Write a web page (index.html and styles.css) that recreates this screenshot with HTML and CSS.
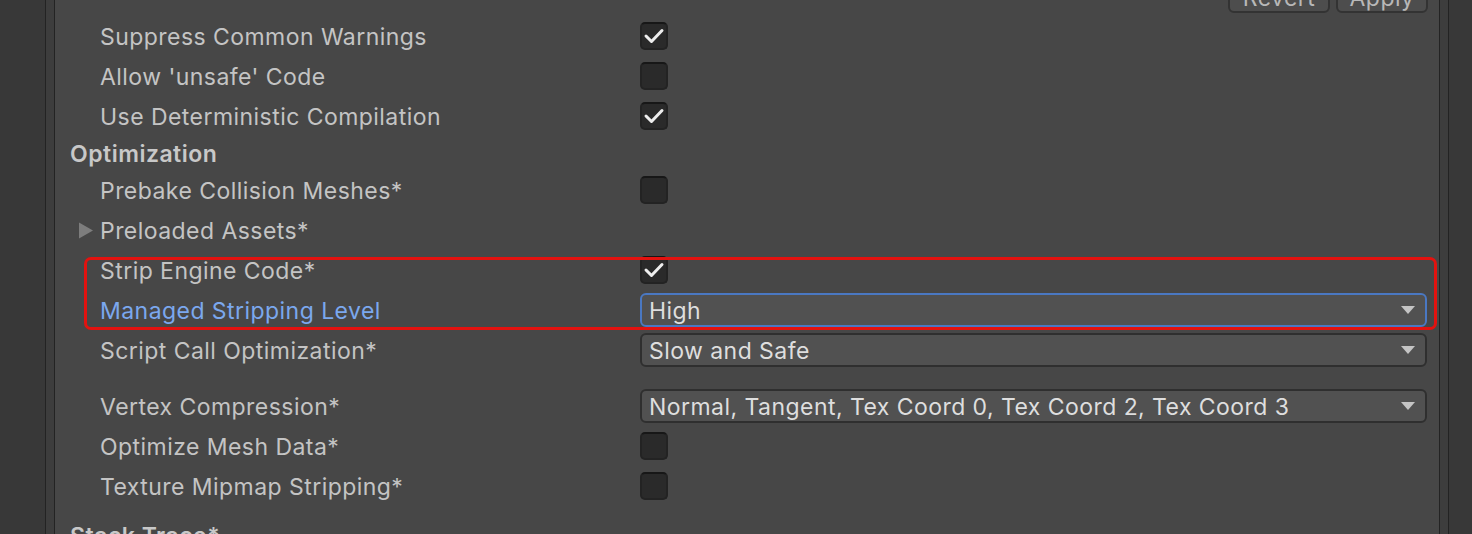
FILE: index.html
```html
<!DOCTYPE html>
<html>
<head>
<meta charset="utf-8">
<link rel="stylesheet" href="styles.css">
</head>
<body>
<div class="window">
  <div class="panel">
    <div class="topbar">
      <button class="btn btn-revert">Revert</button>
      <button class="btn btn-apply">Apply</button>
    </div>
    <div class="rows">
      <div class="row"><span class="label">Suppress Common Warnings</span><span class="check on"><svg viewBox="0 0 28 28"><polyline points="6,14 11.5,19.5 22,8.5"/></svg></span></div>
      <div class="row"><span class="label">Allow 'unsafe' Code</span><span class="check"></span></div>
      <div class="row"><span class="label">Use Deterministic Compilation</span><span class="check on"><svg viewBox="0 0 28 28"><polyline points="6,14 11.5,19.5 22,8.5"/></svg></span></div>
      <div class="header">Optimization</div>
      <div class="row"><span class="label">Prebake Collision Meshes*</span><span class="check"></span></div>
      <div class="row row-fold"><span class="fold"><svg viewBox="0 0 16 17"><polygon points="1,0.5 15,8.5 1,16.5"/></svg></span><span class="label">Preloaded Assets*</span></div>
      <div class="group">
        <div class="row"><span class="label">Strip Engine Code*</span><span class="check on"><svg viewBox="0 0 28 28"><polyline points="6,14 11.5,19.5 22,8.5"/></svg></span></div>
        <div class="row"><span class="label focus">Managed Stripping Level</span><div class="dropdown focused"><span class="value">High</span><span class="arrow"></span></div></div>
        <div class="highlight"></div>
      </div>
      <div class="row"><span class="label">Script Call Optimization*</span><div class="dropdown"><span class="value">Slow and Safe</span><span class="arrow"></span></div></div>
      <div class="spacer"></div>
      <div class="row"><span class="label">Vertex Compression*</span><div class="dropdown"><span class="value">Normal, Tangent, Tex Coord 0, Tex Coord 2, Tex Coord 3</span><span class="arrow"></span></div></div>
      <div class="row"><span class="label">Optimize Mesh Data*</span><span class="check"></span></div>
      <div class="row"><span class="label">Texture Mipmap Stripping*</span><span class="check"></span></div>
      <div class="header header-last">Stack Trace*</div>
    </div>
  </div>
</div>
</body>
</html>
```

FILE: styles.css
```css
* { box-sizing: border-box; }
html, body {
  margin: 0;
  padding: 0;
  height: 534px;
  overflow: hidden;
  background: #383838;
  font-family: Inter, "Noto Sans", sans-serif;
}
.window {
  margin-left: 45px;
  margin-right: 23px;
  height: 534px;
  background: #3d3d3d;
  border-left: 1px solid #232323;
  border-right: 1px solid #232323;
  padding: 0 8px;
}
.panel {
  height: 534px;
  background: #474747;
  border-left: 1px solid #232323;
  border-right: 1px solid #232323;
  overflow: hidden;
}
.topbar {
  display: flex;
  justify-content: flex-end;
  gap: 6px;
  margin-top: -17px;
  height: 30px;
  padding-right: 11px;
}
.btn {
  height: 30px;
  background: #4d4d4d;
  border: 2px solid #333333;
  border-radius: 6px;
  color: #b8b8b8;
  font-family: Inter, "Noto Sans", sans-serif;
  font-size: 23px;
  letter-spacing: 0.45px;
  line-height: 20px;
  padding: 0;
}
.btn-revert { width: 102px; }
.btn-apply { width: 92px; }
.rows {
  margin-top: 3px;
}
.row {
  display: flex;
  align-items: center;
  height: 40px;
  padding-left: 45px;
  padding-right: 12px;
}
.row-fold { padding-left: 23px; }
.fold {
  width: 22px;
  display: flex;
  align-items: center;
}
.fold svg { width: 16px; height: 17px; display: block; }
.fold polygon { fill: #7d7d7d; }
.label {
  width: 540px;
  flex: none;
  color: #c4c4c4;
  font-size: 23px;
  letter-spacing: 0.45px;
  padding-top: 2px;
  white-space: nowrap;
}
.label.focus { color: #7ba8ee; }
.header {
  height: 34px;
  display: flex;
  align-items: center;
  padding-left: 15px;
  padding-top: 2px;
  color: #c8c8c8;
  font-size: 23px;
  font-weight: 600;
  letter-spacing: 0.5px;
}
.header-last { margin-top: 12px; }
.check {
  width: 28px;
  height: 28px;
  background: #2a2a2a;
  border: 2px solid #232323;
  border-top-color: #171717;
  border-radius: 5px;
  display: block;
}
.check svg {
  width: 28px;
  height: 28px;
  display: block;
  margin: -2px;
}
.check polyline {
  fill: none;
  stroke: #eeeeee;
  stroke-width: 3;
  stroke-linecap: round;
  stroke-linejoin: round;
}
.dropdown {
  flex: 1;
  height: 34px;
  background: #515151;
  border: 2px solid #2f2f2f;
  border-radius: 6px;
  display: flex;
  align-items: center;
  padding-left: 7px;
  padding-right: 10px;
}
.dropdown.focused { border-color: #4a78c2; }
.value {
  flex: 1;
  color: #dedede;
  font-size: 23px;
  letter-spacing: 0.45px;
  padding-top: 1px;
  white-space: nowrap;
}
.arrow {
  width: 0;
  height: 0;
  border-left: 7px solid transparent;
  border-right: 7px solid transparent;
  border-top: 8px solid #c4c4c4;
}
.spacer { height: 16px; }
.group { position: relative; }
.highlight {
  position: absolute;
  left: 29px;
  right: 2px;
  top: 7px;
  bottom: 0;
  border: 3px solid #e3120f;
  border-radius: 7px;
  pointer-events: none;
}
```
